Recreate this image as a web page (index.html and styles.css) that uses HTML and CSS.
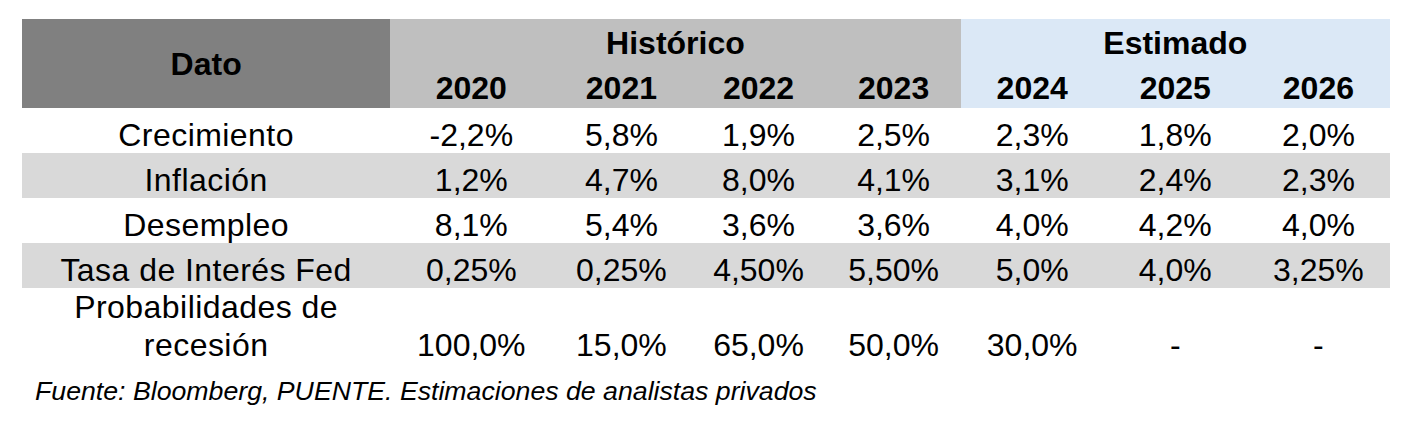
FILE: index.html
```html
<!DOCTYPE html>
<html lang="es">
<head>
<meta charset="utf-8">
<title>Datos económicos</title>
<link rel="stylesheet" href="styles.css">
</head>
<body>
<div class="page">
  <table class="data">
    <colgroup>
      <col class="c-label">
      <col class="c-2020">
      <col class="c-2021">
      <col class="c-2022">
      <col class="c-2023">
      <col class="c-est">
      <col class="c-est">
      <col class="c-est">
    </colgroup>
    <thead>
      <tr class="h1">
        <th class="dato" rowspan="2">Dato</th>
        <th class="hist" colspan="4">Histórico</th>
        <th class="est" colspan="3">Estimado</th>
      </tr>
      <tr class="h2">
        <th class="hist">2020</th>
        <th class="hist">2021</th>
        <th class="hist">2022</th>
        <th class="hist">2023</th>
        <th class="est">2024</th>
        <th class="est">2025</th>
        <th class="est">2026</th>
      </tr>
    </thead>
    <tbody>
      <tr class="row">
        <td class="label">Crecimiento</td><td>-2,2%</td><td>5,8%</td><td>1,9%</td><td>2,5%</td><td>2,3%</td><td>1,8%</td><td>2,0%</td>
      </tr>
      <tr class="row alt">
        <td class="label">Inflación</td><td>1,2%</td><td>4,7%</td><td>8,0%</td><td>4,1%</td><td>3,1%</td><td>2,4%</td><td>2,3%</td>
      </tr>
      <tr class="row">
        <td class="label">Desempleo</td><td>8,1%</td><td>5,4%</td><td>3,6%</td><td>3,6%</td><td>4,0%</td><td>4,2%</td><td>4,0%</td>
      </tr>
      <tr class="row alt">
        <td class="label">Tasa de Interés Fed</td><td>0,25%</td><td>0,25%</td><td>4,50%</td><td>5,50%</td><td>5,0%</td><td>4,0%</td><td>3,25%</td>
      </tr>
      <tr class="row tall">
        <td class="label">Probabilidades de<br>recesión</td><td>100,0%</td><td>15,0%</td><td>65,0%</td><td>50,0%</td><td>30,0%</td><td>-</td><td>-</td>
      </tr>
    </tbody>
  </table>
  <p class="source">Fuente: Bloomberg, PUENTE. Estimaciones de analistas privados</p>
</div>
</body>
</html>
```

FILE: styles.css
```css
html, body {
  margin: 0;
  padding: 0;
  background: #ffffff;
}

.page {
  padding: 19px 0 0 22px;
  font-family: "Liberation Sans", Arial, sans-serif;
  color: #000000;
}

.data {
  border-collapse: collapse;
  border-spacing: 0;
  table-layout: fixed;
  width: 1368px;
}

.c-label { width: 368px; }
.c-2020 { width: 162px; }
.c-2021 { width: 138px; }
.c-2022 { width: 136px; }
.c-2023 { width: 134px; }
.c-est { width: 143px; }

.data th,
.data td {
  padding: 0;
  text-align: center;
  white-space: nowrap;
  font-size: 32px;
  line-height: 36px;
}

.data th {
  font-weight: bold;
  vertical-align: bottom;
  padding-bottom: 2px;
}

.h1 th { height: 42px; }
.h2 th { height: 43px; }

.data th.dato {
  background: #808080;
  vertical-align: middle;
  padding-bottom: 0;
}

.data th.hist { background: #bfbfbf; }
.data th.est { background: #dbe8f6; }

.row td {
  height: 45px;
  vertical-align: bottom;
  font-weight: normal;
}

.row td.label {
  letter-spacing: 0.45px;
}

.row.alt td { background: #d9d9d9; }

.row.tall td {
  height: 76px;
  line-height: 38px;
}

.source {
  margin: 12px 0 0 13px;
  font-style: italic;
  font-size: 26.7px;
  line-height: 30px;
}
```
